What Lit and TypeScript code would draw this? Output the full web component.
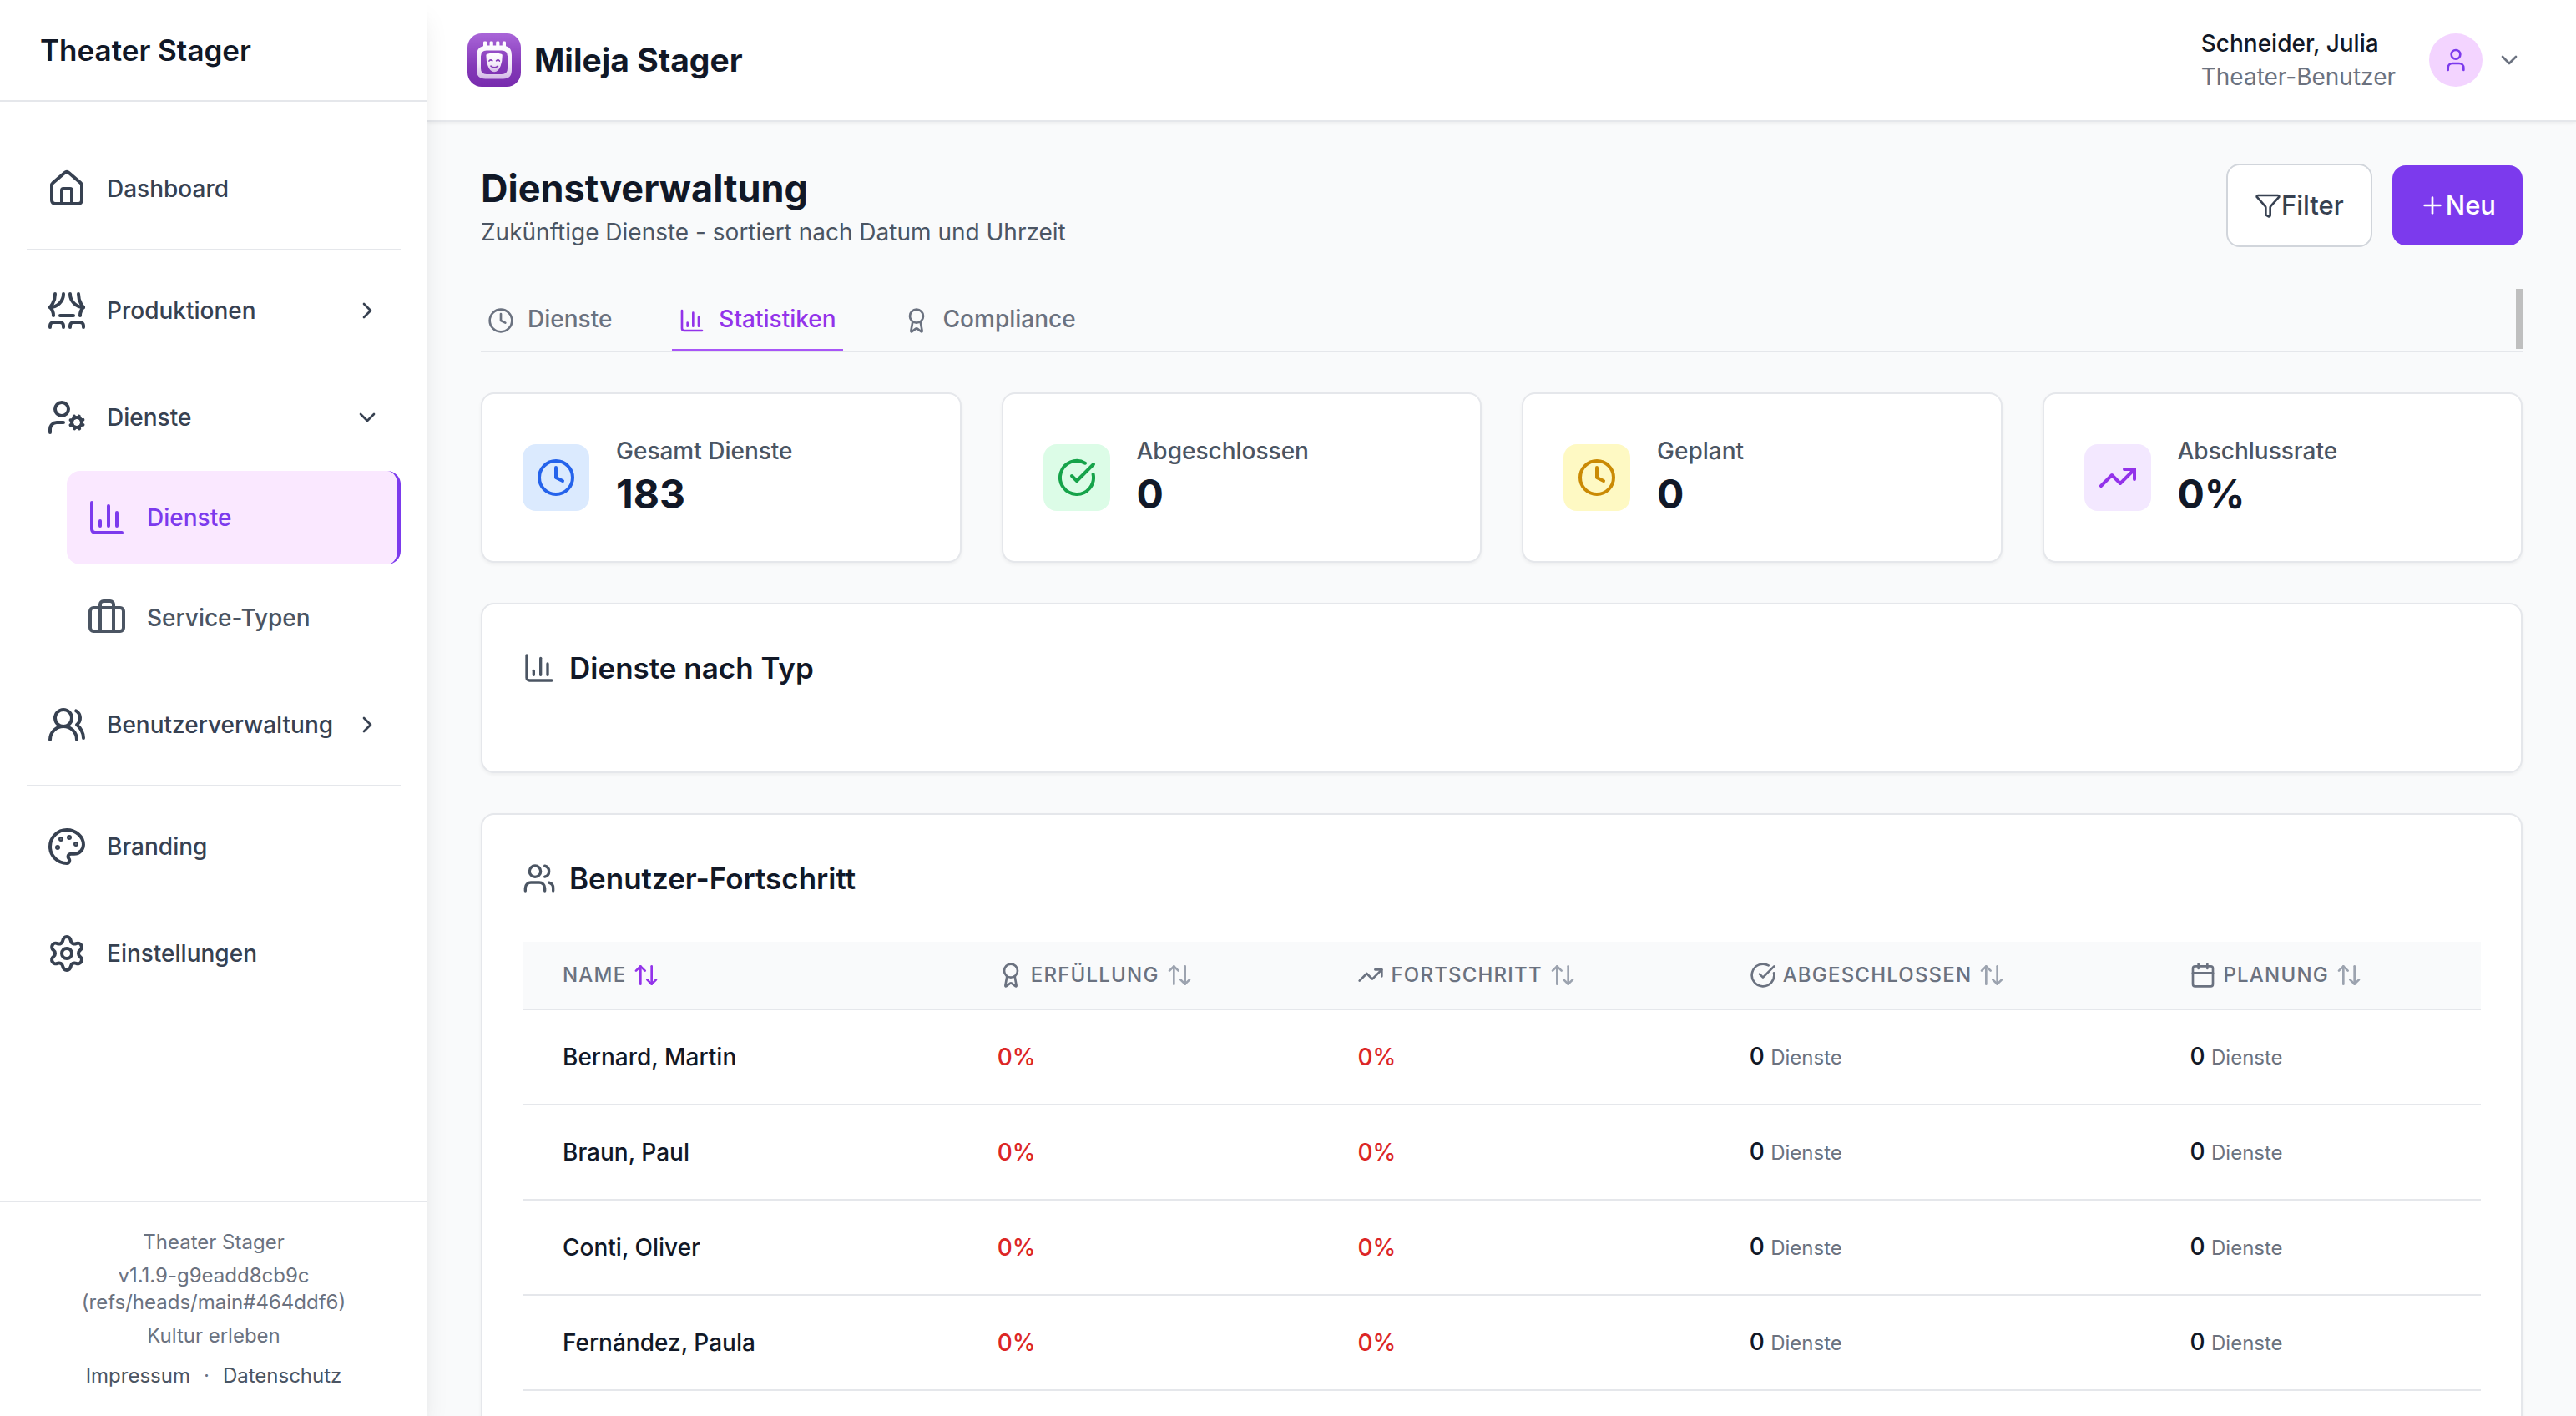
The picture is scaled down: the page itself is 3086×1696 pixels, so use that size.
import { LitElement, html, svg, css, nothing, type SVGTemplateResult } from "lit";
import { customElement, state } from "lit/decorators.js";
import { classMap } from "lit/directives/class-map.js";

/* Stroke icons on a 24-unit grid. */
const ICONS: Record<string, SVGTemplateResult> = {
  house: svg`<path d="M15 21v-8a1 1 0 0 0-1-1h-4a1 1 0 0 0-1 1v8"/><path d="M3 10a2 2 0 0 1 .709-1.528l7-5.999a2 2 0 0 1 2.582 0l7 5.999A2 2 0 0 1 21 10v9a2 2 0 0 1-2 2H5a2 2 0 0 1-2-2z"/>`,
  theater: svg`<path d="M2 10s3-3 3-8"/><path d="M22 10s-3-3-3-8"/><path d="M10 2c0 4.4-3.6 8-8 8"/><path d="M14 2c0 4.4 3.6 8 8 8"/><path d="M2 10s2 2 2 5"/><path d="M22 10s-2 2-2 5"/><path d="M8 15h8"/><path d="M2 22v-1a2 2 0 0 1 2-2h4a2 2 0 0 1 2 2v1"/><path d="M14 22v-1a2 2 0 0 1 2-2h4a2 2 0 0 1 2 2v1"/>`,
  userCog: svg`<circle cx="18" cy="15" r="3"/><circle cx="9" cy="7" r="4"/><path d="M10 15H6a4 4 0 0 0-4 4v2"/><path d="m21.7 16.4-.9-.3"/><path d="m15.2 13.9-.9-.3"/><path d="m16.6 18.7.3-.9"/><path d="m19.1 12.2.3-.9"/><path d="m19.6 18.7-.4-1"/><path d="m16.8 12.3-.4-1"/><path d="m14.3 16.6 1-.4"/><path d="m20.7 13.8 1-.4"/>`,
  chart: svg`<path d="M3 3v16a2 2 0 0 0 2 2h16"/><path d="M18 17V9"/><path d="M13 17V5"/><path d="M8 17v-3"/>`,
  briefcase: svg`<path d="M16 20V4a2 2 0 0 0-2-2h-4a2 2 0 0 0-2 2v16"/><rect width="20" height="14" x="2" y="6" rx="2"/>`,
  usersRound: svg`<path d="M18 21a8 8 0 0 0-16 0"/><circle cx="10" cy="8" r="5"/><path d="M22 20c0-3.37-2-6.5-4-8a5 5 0 0 0-.45-8.3"/>`,
  palette: svg`<circle cx="13.5" cy="6.5" r=".5" fill="currentColor"/><circle cx="17.5" cy="10.5" r=".5" fill="currentColor"/><circle cx="8.5" cy="7.5" r=".5" fill="currentColor"/><circle cx="6.5" cy="12.5" r=".5" fill="currentColor"/><path d="M12 2C6.5 2 2 6.5 2 12s4.5 10 10 10c.926 0 1.648-.746 1.648-1.688 0-.437-.18-.835-.437-1.125-.29-.289-.438-.652-.438-1.125a1.64 1.64 0 0 1 1.668-1.668h1.996c3.051 0 5.555-2.503 5.555-5.554C21.965 6.012 17.461 2 12 2z"/>`,
  settings: svg`<path d="M9.671 4.136a2.34 2.34 0 0 1 4.659 0 2.34 2.34 0 0 0 3.319 1.915 2.34 2.34 0 0 1 2.33 4.033 2.34 2.34 0 0 0 0 3.831 2.34 2.34 0 0 1-2.33 4.033 2.34 2.34 0 0 0-3.319 1.915 2.34 2.34 0 0 1-4.659 0 2.34 2.34 0 0 0-3.32-1.915 2.34 2.34 0 0 1-2.33-4.033 2.34 2.34 0 0 0 0-3.831A2.34 2.34 0 0 1 6.35 6.051a2.34 2.34 0 0 0 3.319-1.915"/><circle cx="12" cy="12" r="3"/>`,
  chevronRight: svg`<path d="m9 18 6-6-6-6"/>`,
  chevronDown: svg`<path d="m6 9 6 6 6-6"/>`,
  user: svg`<path d="M19 21v-2a4 4 0 0 0-4-4H9a4 4 0 0 0-4 4v2"/><circle cx="12" cy="7" r="4"/>`,
  users: svg`<path d="M16 21v-2a4 4 0 0 0-4-4H6a4 4 0 0 0-4 4v2"/><path d="M16 3.128a4 4 0 0 1 0 7.744"/><path d="M22 21v-2a4 4 0 0 0-3-3.87"/><circle cx="9" cy="7" r="4"/>`,
  funnel: svg`<path d="M10 20a1 1 0 0 0 .553.895l2 1A1 1 0 0 0 14 21v-7a2 2 0 0 1 .517-1.341L21.74 4.67A1 1 0 0 0 21 3H3a1 1 0 0 0-.742 1.67l7.225 7.989A2 2 0 0 1 10 14z"/>`,
  plus: svg`<path d="M5 12h14"/><path d="M12 5v14"/>`,
  clock: svg`<circle cx="12" cy="12" r="10"/><path d="M12 6v6l4 2"/>`,
  award: svg`<path d="m15.477 12.89 1.515 8.526a.5.5 0 0 1-.81.47l-3.58-2.687a1 1 0 0 0-1.197 0l-3.586 2.686a.5.5 0 0 1-.81-.469l1.514-8.526"/><circle cx="12" cy="8" r="6"/>`,
  check: svg`<path d="M21.801 10A10 10 0 1 1 17 3.335"/><path d="m9 11 3 3L22 4"/>`,
  trend: svg`<path d="M16 7h6v6"/><path d="m22 7-8.5 8.5-5-5L2 17"/>`,
  calendar: svg`<path d="M8 2v4"/><path d="M16 2v4"/><rect width="18" height="18" x="3" y="4" rx="2"/><path d="M3 10h18"/>`,
  sort: svg`<path d="m21 16-4 4-4-4"/><path d="M17 20V4"/><path d="m3 8 4-4 4 4"/><path d="M7 4v16"/>`,
};

const icon = (name: string, cls: string) =>
  html`<svg class="icon ${cls}" viewBox="0 0 24 24" aria-hidden="true">${ICONS[name]}</svg>`;

const logo = html`<svg class="logo" viewBox="0 0 64 64" aria-hidden="true">
  <defs>
    <linearGradient id="tile" x1="0" y1="0" x2="0" y2="1">
      <stop offset="0" stop-color="#a965d8" />
      <stop offset="0.6" stop-color="#8439b8" />
      <stop offset="1" stop-color="#782cae" />
    </linearGradient>
    <linearGradient id="frame" x1="0" y1="0" x2="0" y2="1">
      <stop offset="0" stop-color="#ffffff" />
      <stop offset="0.6" stop-color="#f3eaf9" />
      <stop offset="1" stop-color="#d3b9e6" />
    </linearGradient>
  </defs>
  <rect width="64" height="64" rx="17" fill="url(#tile)" />
  <path
    fill="url(#frame)"
    fill-rule="evenodd"
    d="M19 11a1.4 1.4 0 0 1 1.4-1.4h1.4a1.4 1.4 0 0 1 1.4 1.4v3.6h3.4V11a1.4 1.4 0 0 1 1.4-1.4h1.4a1.4 1.4 0 0 1 1.4 1.4v3.6h3.4V11a1.4 1.4 0 0 1 1.4-1.4h1.4a1.4 1.4 0 0 1 1.4 1.4v3.6h3.4V11a1.4 1.4 0 0 1 1.4-1.4h1.4a1.4 1.4 0 0 1 1.4 1.4v4.2Q53 17 53 26v18q0 10.500-10.500 10.500h-21Q11 54.500 11 44V26Q11 17 19 15.200zM23 20.500q-7 0-7 7v14.500q0 7 7 7h18q7 0 7-7V27.500q0-7-7-7z"
  />
  <path
    fill="url(#frame)"
    d="M22.400 26.200q0-1.200 1.200-1.500 8.600-2.400 17 0 1.200.3 1.200 1.500 0 7-2 12.500-2.600 7.500-7.700 7.500t-7.700-7.500q-2-5.500-2-12.500z"
  />
  <g fill="none" stroke="#8439b8" stroke-width="1.700" stroke-linecap="round">
    <path d="M26 33q1.800-2 3.800-.2M34.600 32.800q2-1.800 3.800.2" />
    <path d="M28 39.200q4.200 3.600 8.400 0" />
  </g>
</svg>`;

interface NavItem {
  label: string;
  icon: string;
  chevron?: "chevronRight" | "chevronDown";
  children?: { label: string; icon: string; active?: boolean }[];
}

const NAV_GROUPS: NavItem[][] = [
  [{ label: "Dashboard", icon: "house" }],
  [
    { label: "Produktionen", icon: "theater", chevron: "chevronRight" },
    {
      label: "Dienste",
      icon: "userCog",
      chevron: "chevronDown",
      children: [
        { label: "Dienste", icon: "chart", active: true },
        { label: "Service-Typen", icon: "briefcase" },
      ],
    },
    { label: "Benutzerverwaltung", icon: "usersRound", chevron: "chevronRight" },
  ],
  [
    { label: "Branding", icon: "palette" },
    { label: "Einstellungen", icon: "settings" },
  ],
];

const TABS = [
  { label: "Dienste", icon: "clock" },
  { label: "Statistiken", icon: "chart" },
  { label: "Compliance", icon: "award" },
];

const STATS = [
  { label: "Gesamt Dienste", value: "183", icon: "clock", tone: "blue" },
  { label: "Abgeschlossen", value: "0", icon: "check", tone: "green" },
  { label: "Geplant", value: "0", icon: "clock", tone: "yellow" },
  { label: "Abschlussrate", value: "0%", icon: "trend", tone: "purple" },
];

const COLUMNS: { label: string; icon?: string; cls: string }[] = [
  { label: "Name", cls: "col-name" },
  { label: "Erfüllung", icon: "award", cls: "col-fulfil" },
  { label: "Fortschritt", icon: "trend", cls: "col-progress" },
  { label: "Abgeschlossen", icon: "check", cls: "col-done" },
  { label: "Planung", icon: "calendar", cls: "col-plan" },
];

const USERS = ["Bernard, Martin", "Braun, Paul", "Conti, Oliver", "Fernández, Paula"];

@customElement("app-root")
export class AppRoot extends LitElement {
  @state() private tab = "Statistiken";
  @state() private sortedBy = "Name";

  static styles = css`
    :host {
      display: flex;
      height: 100vh;
      overflow: hidden;
      background: #f9fafb;
      color: #111827;
      font-family: Inter, "Liberation Sans", sans-serif;
      font-size: 28px;
      line-height: 40px;
    }
    * { box-sizing: border-box; }
    h1, h2, p, ul { margin: 0; padding: 0; }
    ul { list-style: none; }
    a { color: inherit; text-decoration: none; }
    button {
      margin: 0;
      padding: 0;
      border: 0;
      background: none;
      color: inherit;
      font: inherit;
      text-align: left;
      cursor: pointer;
    }
    .icon {
      flex: none;
      fill: none;
      stroke: currentColor;
      stroke-width: 2;
      stroke-linecap: round;
      stroke-linejoin: round;
    }
    .s32 { width: 32px; height: 32px; }
    .s40 { width: 40px; height: 40px; }
    .s48 { width: 48px; height: 48px; }

    .sidebar {
      position: relative;
      z-index: 2;
      display: flex;
      flex: none;
      flex-direction: column;
      width: 512px;
      background: #fff;
      box-shadow: 0 20px 30px -6px rgba(0, 0, 0, 0.1), 0 8px 12px -8px rgba(0, 0, 0, 0.1);
    }
    .brand {
      padding: 32px 48px;
      border-bottom: 2px solid #e5e7eb;
      font-size: 35px;
      font-weight: 600;
      line-height: 56px;
    }
    .nav {
      flex: 1;
      padding: 48px 32px;
    }
    .group {
      display: flex;
      flex-direction: column;
      gap: 16px;
    }
    .group + .group {
      margin-top: 16px;
      padding-top: 16px;
      border-top: 2px solid #e5e7eb;
    }
    .nav-item {
      display: flex;
      align-items: center;
      gap: 24px;
      width: 100%;
      padding: 32px 24px;
      border-radius: 16px;
      color: #374151;
      font-weight: 500;
      line-height: 48px;
    }
    .nav-label { flex: 1; }
    .sub {
      display: flex;
      flex-direction: column;
      gap: 8px;
      margin: 8px 0 0 48px;
    }
    .sub .nav-item { color: #4b5563; }
    .sub .nav-item.active {
      border-right: 4px solid #7c3aed;
      background: #fae8ff;
      color: #7c3aed;
    }
    .foot {
      display: flex;
      flex-direction: column;
      gap: 8px;
      padding: 32px;
      border-top: 2px solid #e5e7eb;
      color: #6b7280;
      font-size: 24px;
      line-height: 32px;
      text-align: center;
    }
    .foot-links {
      display: flex;
      justify-content: center;
      gap: 16px;
      margin-top: 8px;
    }
    .foot-links a { color: #4b5563; }

    .page {
      display: flex;
      flex: 1;
      flex-direction: column;
      min-width: 0;
    }
    .topbar {
      position: relative;
      z-index: 1;
      display: flex;
      flex: none;
      align-items: center;
      justify-content: space-between;
      padding: 32px 64px 32px 48px;
      border-bottom: 2px solid #e5e7eb;
      background: #fff;
      box-shadow: 0 2px 4px rgba(0, 0, 0, 0.05);
    }
    .product {
      display: flex;
      align-items: center;
      gap: 16px;
      font-size: 39px;
      font-weight: 700;
      line-height: 56px;
    }
    .logo { width: 64px; height: 64px; }
    .account {
      display: flex;
      align-items: center;
      gap: 16px;
      color: #6b7280;
    }
    .account-text {
      display: flex;
      flex-direction: column;
      margin-right: 24px;
    }
    .account-name { color: #111827; font-weight: 500; }
    .avatar {
      display: flex;
      align-items: center;
      justify-content: center;
      width: 64px;
      height: 64px;
      border-radius: 50%;
      background: #f3d4ff;
      color: #7c3aed;
    }

    .content {
      display: flex;
      flex: 1;
      flex-direction: column;
      gap: 48px;
      min-height: 0;
      padding: 48px 64px;
      overflow-y: auto;
      scrollbar-width: none;
    }
    .content > * { flex: none; }
    .heading {
      display: flex;
      align-items: center;
      justify-content: space-between;
    }
    .heading h1 {
      font-size: 45px;
      font-weight: 700;
      line-height: 64px;
    }
    .heading p { color: #4b5563; }
    .actions {
      display: flex;
      align-items: center;
      gap: 24px;
    }
    .btn {
      display: flex;
      align-items: center;
      padding: 24px 32px;
      border-radius: 16px;
      font-size: 31px;
      font-weight: 500;
      line-height: 48px;
    }
    .btn-filter {
      border: 2px solid #d1d5db;
      background: #fff;
      color: #374151;
    }
    .btn-new { background: #7c3aed; color: #fff; }

    .tabs {
      position: relative;
      display: flex;
      gap: 64px;
      border-bottom: 2px solid #e5e7eb;
    }
    .tabs::after {
      position: absolute;
      top: 0;
      right: 0;
      bottom: 2px;
      width: 8px;
      background: #bfbfbf;
      content: "";
    }
    .tab {
      padding: 16px 8px;
      border-bottom: 2px solid transparent;
      color: #6b7280;
      font-weight: 500;
      white-space: nowrap;
    }
    .tab .icon {
      margin-right: 16px;
      vertical-align: middle;
    }
    .tab.selected {
      border-color: #a855f7;
      color: #9333ea;
    }

    .stats {
      display: grid;
      grid-template-columns: repeat(4, 1fr);
      gap: 48px;
    }
    .card {
      padding: 48px;
      border: 2px solid #e5e7eb;
      border-radius: 16px;
      background: #fff;
      box-shadow: 0 2px 4px rgba(0, 0, 0, 0.05);
    }
    .stat {
      display: flex;
      align-items: center;
      gap: 32px;
    }
    .badge {
      display: flex;
      padding: 16px;
      border-radius: 16px;
    }
    .blue { background: #dbeafe; color: #2563eb; }
    .green { background: #dcfce7; color: #16a34a; }
    .yellow { background: #fef9c3; color: #ca8a04; }
    .purple { background: #f3e8ff; color: #9333ea; }
    .stat-label { color: #4b5563; font-weight: 500; }
    .stat-value {
      font-size: 48px;
      font-weight: 700;
      line-height: 64px;
    }
    .card h2 {
      display: flex;
      align-items: center;
      gap: 16px;
      margin-bottom: 48px;
      font-size: 35px;
      font-weight: 600;
      line-height: 56px;
    }
    .card h2 .icon { color: #4b5563; }

    table {
      width: 100%;
      border-collapse: separate;
      border-spacing: 0;
      table-layout: fixed;
    }
    .col-name { width: 22.2%; }
    .col-fulfil { width: 18.4%; }
    .col-progress { width: 20%; }
    .col-done { width: 22.5%; }
    .col-plan { width: 16.9%; }
    th {
      padding: 24px 48px;
      border-bottom: 2px solid #e5e7eb;
      background: #f9fafb;
      text-align: left;
    }
    .sort {
      display: flex;
      align-items: center;
      gap: 8px;
      color: #6b7280;
      font-size: 24px;
      font-weight: 500;
      letter-spacing: 0.05em;
      line-height: 32px;
      text-transform: uppercase;
      white-space: nowrap;
    }
    .arrows { color: #9ca3af; }
    .arrows.on { color: #9333ea; }
    td {
      height: 114px;
      padding: 0 48px;
      border-bottom: 2px solid #e5e7eb;
      font-weight: 500;
      white-space: nowrap;
    }
    .rate { color: #dc2626; }
    .unit {
      color: #6b7280;
      font-size: 24px;
      font-weight: 400;
    }
  `;

  private renderNavItem(item: NavItem) {
    const body = html`${icon(item.icon, "s48")}<span class="nav-label">${item.label}</span>${item.chevron
        ? icon(item.chevron, "s32")
        : nothing}`;
    return html`<li>
      ${item.chevron
        ? html`<button class="nav-item" type="button" aria-expanded=${item.children ? "true" : "false"}>${body}</button>`
        : html`<a class="nav-item" href="#">${body}</a>`}
      ${item.children
        ? html`<ul class="sub">
            ${item.children.map(
              (c) => html`<li>
                <a class=${classMap({ "nav-item": true, active: !!c.active })} href="#"
                  >${icon(c.icon, "s48")}<span class="nav-label">${c.label}</span></a
                >
              </li>`
            )}
          </ul>`
        : nothing}
    </li>`;
  }

  render() {
    return html`
      <aside class="sidebar">
        <div class="brand">Theater Stager</div>
        <nav class="nav">
          ${NAV_GROUPS.map((g) => html`<ul class="group">${g.map((i) => this.renderNavItem(i))}</ul>`)}
        </nav>
        <footer class="foot">
          <p>Theater Stager</p>
          <p>v1.1.9-g9eadd8cb9c (refs/heads/main#464ddf6)</p>
          <p>Kultur erleben</p>
          <div class="foot-links"><a href="#">Impressum</a><span>·</span><a href="#">Datenschutz</a></div>
        </footer>
      </aside>
      <div class="page">
        <header class="topbar">
          <div class="product">${logo}<span>Mileja Stager</span></div>
          <button class="account" type="button">
            <span class="account-text">
              <span class="account-name">Schneider, Julia</span>
              <span>Theater-Benutzer</span>
            </span>
            <span class="avatar">${icon("user", "s32")}</span>
            ${icon("chevronDown", "s32")}
          </button>
        </header>
        <main class="content">
          <div class="heading">
            <div>
              <h1>Dienstverwaltung</h1>
              <p>Zukünftige Dienste - sortiert nach Datum und Uhrzeit</p>
            </div>
            <div class="actions">
              <button class="btn btn-filter" type="button">${icon("funnel", "s32")}Filter</button>
              <button class="btn btn-new" type="button">${icon("plus", "s32")}Neu</button>
            </div>
          </div>
          <div class="tabs" role="tablist">
            ${TABS.map(
              (t) => html`<button
                class=${classMap({ tab: true, selected: t.label === this.tab })}
                type="button"
                role="tab"
                aria-selected=${t.label === this.tab ? "true" : "false"}
                @click=${() => (this.tab = t.label)}
              >${icon(t.icon, "s32")}${t.label}</button>`
            )}
          </div>
          <div class="stats">
            ${STATS.map(
              (s) => html`<div class="card stat">
                <span class="badge ${s.tone}">${icon(s.icon, "s48")}</span>
                <div>
                  <p class="stat-label">${s.label}</p>
                  <p class="stat-value">${s.value}</p>
                </div>
              </div>`
            )}
          </div>
          <section class="card">
            <h2>${icon("chart", "s40")}Dienste nach Typ</h2>
          </section>
          <section class="card">
            <h2>${icon("users", "s40")}Benutzer-Fortschritt</h2>
            <table>
              <thead>
                <tr>
                  ${COLUMNS.map(
                    (c) => html`<th class=${c.cls} scope="col">
                      <button class="sort" type="button" @click=${() => (this.sortedBy = c.label)}>
                        ${c.icon ? icon(c.icon, "s32") : nothing}<span>${c.label}</span>${icon(
                          "sort",
                          c.label === this.sortedBy ? "s32 arrows on" : "s32 arrows"
                        )}
                      </button>
                    </th>`
                  )}
                </tr>
              </thead>
              <tbody>
                ${USERS.map(
                  (name) => html`<tr>
                    <td>${name}</td>
                    <td class="rate">0%</td>
                    <td class="rate">0%</td>
                    <td>0 <span class="unit">Dienste</span></td>
                    <td>0 <span class="unit">Dienste</span></td>
                  </tr>`
                )}
              </tbody>
            </table>
          </section>
        </main>
      </div>
    `;
  }
}
